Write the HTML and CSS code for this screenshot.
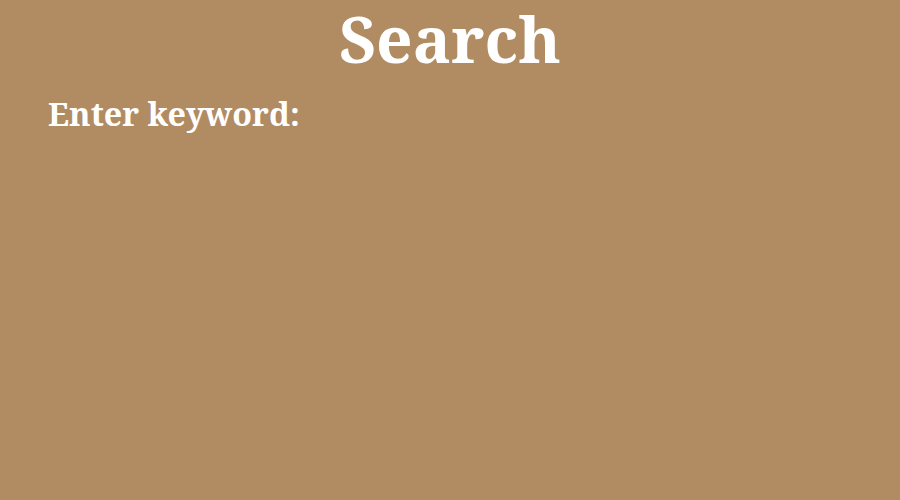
FILE: index.html
```html
<!DOCTYPE html>
<html>
<head><meta charset="utf-8"><link rel="stylesheet" href="styles.css"></head>
<body>
<main class="page">
  <h1 class="title">Search</h1>
  <label class="label" for="kw">Enter keyword:</label>
</main>
</body>
</html>
```
FILE: styles.css
```css
html, body { height: 100%; }
body { margin: 0; background: #b18b62; color: #fff; font-family: "Noto Serif", "DejaVu Serif", serif; font-weight: bold; }
.page { display: flex; flex-direction: column; padding: 0 48px; }
.title { font-size: 64px; line-height: 78px; text-align: center; margin: 0; }
.label { display: block; font-size: 32.3px; margin-top: 13px; }
```
